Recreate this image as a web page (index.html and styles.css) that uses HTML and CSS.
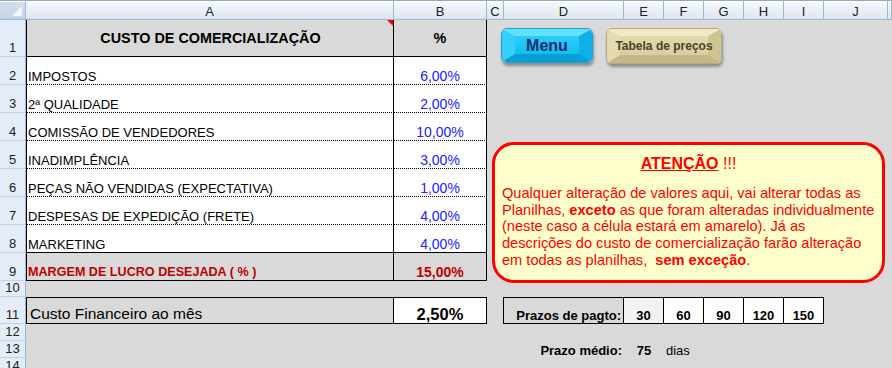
FILE: index.html
```html
<!DOCTYPE html>
<html lang="pt">
<head>
<meta charset="utf-8">
<title>Custo de comercialização</title>
<link rel="stylesheet" href="styles.css">
</head>
<body>
<div class="sheet">
  <div class="corner"><span class="corner-tri"></span></div>
  <div class="colhd">A</div>
  <div class="colhd">B</div>
  <div class="colhd">C</div>
  <div class="colhd">D</div>
  <div class="colhd">E</div>
  <div class="colhd">F</div>
  <div class="colhd">G</div>
  <div class="colhd">H</div>
  <div class="colhd">I</div>
  <div class="colhd">J</div>
  <div class="colhd"></div>

  <div class="rowhd">1</div>
  <div class="cell a head solid">CUSTO DE COMERCIALIZAÇÃO<span class="comment-mark"></span></div>
  <div class="cell b head solid">%</div>
  <div class="spacer span9"></div>

  <div class="rowhd">2</div>
  <div class="cell a white dot">IMPOSTOS</div>
  <div class="cell b white dot pct">6,00%</div>
  <div class="spacer span9"></div>

  <div class="rowhd">3</div>
  <div class="cell a white dot">2ª QUALIDADE</div>
  <div class="cell b white dot pct">2,00%</div>
  <div class="spacer span9"></div>

  <div class="rowhd">4</div>
  <div class="cell a white dot">COMISSÃO DE VENDEDORES</div>
  <div class="cell b white dot pct">10,00%</div>
  <div class="spacer span9"></div>

  <div class="rowhd">5</div>
  <div class="cell a white dot">INADIMPLÊNCIA</div>
  <div class="cell b white dot pct">3,00%</div>
  <div class="spacer span9"></div>

  <div class="rowhd">6</div>
  <div class="cell a white dot">PEÇAS NÃO VENDIDAS (EXPECTATIVA)</div>
  <div class="cell b white dot pct">1,00%</div>
  <div class="spacer span9"></div>

  <div class="rowhd">7</div>
  <div class="cell a white dot">DESPESAS DE EXPEDIÇÃO (FRETE)</div>
  <div class="cell b white dot pct">4,00%</div>
  <div class="spacer span9"></div>

  <div class="rowhd">8</div>
  <div class="cell a white solid">MARKETING</div>
  <div class="cell b white solid pct">4,00%</div>
  <div class="spacer span9"></div>

  <div class="rowhd">9</div>
  <div class="cell a solid margin margin-label">MARGEM DE LUCRO DESEJADA ( % )</div>
  <div class="cell b solid margin margin-value">15,00%</div>
  <div class="spacer span9"></div>

  <div class="rowhd">10</div>
  <div class="spacer span11"></div>

  <div class="rowhd">11</div>
  <div class="cell fin-a">Custo Financeiro ao mês</div>
  <div class="cell fin-b">2,50%</div>
  <div class="cell c-edge"></div>
  <div class="cell term-label">Prazos de pagto:</div>
  <div class="cell term term-first">30</div>
  <div class="cell term">60</div>
  <div class="cell term">90</div>
  <div class="cell term">120</div>
  <div class="cell term">150</div>
  <div class="spacer span2"></div>

  <div class="rowhd">12</div>
  <div class="spacer span11"></div>

  <div class="rowhd">13</div>
  <div class="spacer span3"></div>
  <div class="cell avg-label">Prazo médio:</div>
  <div class="cell avg-value">75</div>
  <div class="cell avg-unit">dias</div>
  <div class="spacer span5"></div>

  <div class="rowhd">14</div>
  <div class="spacer span11"></div>

  <div class="btn btn-menu"><div class="btn-face">Menu</div></div>
  <div class="btn btn-prices"><div class="btn-face">Tabela de preços</div></div>

  <div class="note">
    <div class="note-title"><span class="note-strong">ATENÇÃO</span> !!!</div>
    <div class="note-body">Qualquer alteração de valores aqui, vai alterar todas as<br>Planilhas, <b>exceto</b> as que foram alteradas individualmente<br>(neste caso a célula estará em amarelo). Já as<br>descrições do custo de comercialização farão alteração<br>em todas as planilhas, &nbsp;<b>sem exceção</b>.</div>
  </div>
</div>
</body>
</html>
```

FILE: styles.css
```css
* {
  box-sizing: border-box;
}

body {
  margin: 0;
  width: 892px;
  height: 368px;
  overflow: hidden;
  background: #d9d9d9;
  font-family: "Liberation Sans", Arial, sans-serif;
}

.sheet {
  position: relative;
  display: grid;
  grid-template-columns: 26px 368px 93px 17px 120px repeat(5, 40px) 64px 1fr;
  grid-template-rows: 20px 37px repeat(8, 28px) 16px 27px 17px 17px 17px;
  height: 368px;
  background: #d9d9d9;
}

/* headers */
.corner,
.colhd {
  border-top: 1px solid #8fa8c8;
  border-right: 1px solid #9eb6ce;
  border-bottom: 1px solid #9eb6ce;
  box-shadow: inset 0 1px 0 #ffffff;
}

.colhd {
  display: flex;
  align-items: center;
  justify-content: center;
  padding-top: 2px;
  background: linear-gradient(#f8fafd, #dde5ef);
  font-size: 13px;
  color: #222;
}

.corner {
  display: flex;
  align-items: flex-end;
  justify-content: flex-end;
  padding: 0 3px 3px 0;
  background: linear-gradient(#d3dfee, #c3d3e7);
}

.corner-tri {
  width: 0;
  height: 0;
  border-left: 10px solid transparent;
  border-bottom: 10px solid #f1f5fa;
}

.rowhd {
  display: flex;
  align-items: flex-end;
  justify-content: center;
  padding-bottom: 1px;
  background: #e4ecf7;
  border-right: 1px solid #9eb6ce;
  border-bottom: 1px solid #c4d2e3;
  font-size: 13px;
  line-height: 15px;
  color: #222;
}

/* cells */
.spacer.span2 { grid-column: span 2; }
.spacer.span3 { grid-column: span 3; }
.spacer.span5 { grid-column: span 5; }
.spacer.span9 { grid-column: span 9; }
.spacer.span11 { grid-column: span 11; }

.cell {
  display: flex;
  align-items: flex-end;
  font-size: 13px;
  line-height: 15px;
  white-space: nowrap;
  color: #000;
}

.a {
  position: relative;
  padding-left: 1px;
  border-left: 1px solid #000;
  border-right: 1px solid #000;
}

.b {
  justify-content: center;
  border-right: 1px solid #000;
}

.white { background: #ffffff; }
.dot { border-bottom: 1px dotted #000; }
.solid { border-bottom: 1px solid #000; }

.head {
  align-items: center;
  justify-content: center;
  font-weight: bold;
  font-size: 14.4px;
  line-height: 17px;
}

.comment-mark {
  position: absolute;
  top: 0;
  right: 0;
  width: 0;
  height: 0;
  border-left: 6px solid transparent;
  border-top: 6px solid #ff0000;
}

.pct {
  color: #2020ff;
  font-size: 14px;
  line-height: 16px;
}

.margin {
  color: #c00000;
  font-weight: bold;
}

.margin-label {
  font-size: 12.6px;
}

.margin-value {
  font-size: 14px;
  line-height: 16px;
}

.fin-a {
  padding-left: 3px;
  border: 1px solid #000;
  font-size: 15.5px;
  line-height: 18px;
}

.fin-b {
  justify-content: center;
  background: #ffffff;
  border-top: 1px solid #000;
  border-bottom: 1px solid #000;
  border-right: 1px solid #000;
  font-size: 16.5px;
  line-height: 18px;
  font-weight: bold;
}

.c-edge {
  border-right: 1px solid #000;
}

.term-label {
  justify-content: flex-end;
  padding-right: 2px;
  border-top: 1px solid #000;
  border-bottom: 1px solid #000;
  border-right: 1px solid #000;
  font-weight: bold;
}

.term {
  justify-content: center;
  background: #ffffff;
  border-top: 1px solid #000;
  border-bottom: 1px solid #000;
  border-right: 1px solid #000;
  font-weight: bold;
}

.term-first { background: #f2f2f2; }

.avg-label {
  justify-content: flex-end;
  padding-right: 2px;
  font-weight: bold;
}

.avg-value {
  justify-content: center;
  font-weight: bold;
}

.avg-unit {
  padding-left: 2px;
}

/* floating shapes */
.btn {
  position: absolute;
  top: 28px;
  border-radius: 6px;
  overflow: hidden;
  box-shadow: 1px 3px 3px rgba(0, 0, 0, 0.35);
}

.btn-face {
  display: flex;
  align-items: center;
  justify-content: center;
  height: 100%;
  border-style: solid;
  border-width: 7px 13px 8px 13px;
  font-weight: bold;
  white-space: nowrap;
}

.btn-menu {
  left: 501px;
  width: 92px;
  height: 35px;
  border: 1px solid #1d9fd0;
}

.btn-menu .btn-face {
  border-color: #63e2ff #0db1e7 #08a0d7 #34cffa;
  background: linear-gradient(#2ccdf8, #12bef0);
  color: #0f2b6c;
  font-size: 16px;
  padding-top: 1px;
}

.btn-prices {
  left: 606px;
  width: 116px;
  height: 36px;
  border: 1px solid #b4a978;
}

.btn-prices .btn-face {
  border-color: #efe9ca #cfc594 #c3b887 #e3dab0;
  background: linear-gradient(#e2d9af, #d8cea1);
  color: #4b4223;
  font-size: 12px;
  padding-top: 1px;
}

.note {
  position: absolute;
  left: 492px;
  top: 142px;
  width: 393px;
  height: 141px;
  padding: 10px 7px 0 7px;
  border: 3px solid #ff0000;
  border-radius: 22px;
  background: #ffffcc;
  color: #ff0000;
}

.note-title {
  text-align: center;
  font-size: 16px;
  line-height: 18px;
  margin-bottom: 12px;
}

.note-strong {
  font-weight: bold;
  text-decoration: underline;
}

.note-body {
  font-size: 14.6px;
  line-height: 16.7px;
  white-space: nowrap;
}
```
